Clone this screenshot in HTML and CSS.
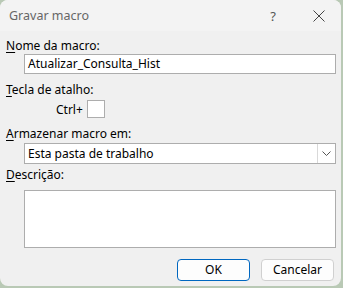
FILE: index.html
```html
<!DOCTYPE html>
<html lang="pt">
<head>
  <meta charset="UTF-8" />
  <title>Gravar macro</title>
  <link rel="stylesheet" href="styles.css">
</head>
<body>
  <div class="dialog">
    <div class="titlebar">
      <span class="title">Gravar macro</span>
      <span class="help">?</span>
      <svg class="close" width="12" height="12" viewBox="0 0 12 12">
        <path d="M0.5 0.5 L11.5 11.5 M11.5 0.5 L0.5 11.5" stroke="#444" stroke-width="1" fill="none"/>
      </svg>
    </div>

    <div class="content">
      <div class="label"><u>N</u>ome da macro:</div>
      <div class="box input">Atualizar_Consulta_Hist</div>

      <div class="label gap"><u>T</u>ecla de atalho:</div>
      <div class="shortcut">
        <span>Ctrl+</span>
        <div class="box key"></div>
      </div>

      <div class="label gap"><u>A</u>rmazenar macro em:</div>
      <div class="box combo">
        <span>Esta pasta de trabalho</span>
        <div class="arrow">
          <svg width="9" height="5" viewBox="0 0 9 5">
            <path d="M0.5 0.5 L4.5 4.5 L8.5 0.5" stroke="#555" stroke-width="1" fill="none"/>
          </svg>
        </div>
      </div>

      <div class="label gap-sm"><u>D</u>escrição:</div>
      <div class="box textarea"></div>

      <div class="buttons">
        <div class="btn primary">OK</div>
        <div class="btn">Cancelar</div>
      </div>
    </div>
  </div>
</body>
</html>
```

FILE: styles.css
```css
body {
  margin: 0;
  padding: 0;
  background: #b9c9b5;
  font-family: "Noto Sans", "Open Sans", sans-serif;
  font-size: 12px;
  color: #000;
}
.dialog {
  width: 341px;
  height: 286px;
  background: #f0f0f0;
  border-radius: 8px;
  overflow: hidden;
}
.titlebar {
  height: 31px;
  background: #f3f3f3;
  display: flex;
  align-items: center;
  padding-left: 9px;
}
.title {
  color: #666;
  font-size: 12.5px;
  flex: 1;
}
.help {
  color: #555;
  font-size: 13px;
  margin-right: 37px;
}
.close {
  margin-right: 16px;
}
.content {
  padding: 7px 5px 0 6px;
}
.label {
  line-height: 15px;
  height: 15px;
}
.label u {
  text-decoration-thickness: 1px;
  text-underline-offset: 2px;
}
.gap {
  margin-top: 8px;
}
.gap-sm {
  margin-top: 3px;
}
.box {
  background: #fff;
  border: 1px solid #adadad;
  box-sizing: border-box;
}
.input {
  margin: 1px 0 0 18px;
  height: 20px;
  line-height: 18px;
  padding-left: 3px;
}
.shortcut {
  display: flex;
  align-items: center;
  margin: 3px 0 0 50px;
}
.shortcut span {
  margin-right: 4px;
}
.key {
  width: 18px;
  height: 18px;
}
.combo {
  margin: 2px 0 0 18px;
  height: 21px;
  display: flex;
  align-items: center;
  padding-left: 3px;
}
.combo span {
  flex: 1;
}
.arrow {
  width: 17px;
  height: 19px;
  border-left: 1px solid #d9d9d9;
  display: flex;
  align-items: center;
  justify-content: center;
}
.textarea {
  margin: 8px 0 0 18px;
  height: 58px;
}
.buttons {
  display: flex;
  justify-content: flex-end;
  gap: 11px;
  margin: 11px 2px 0 0;
}
.btn {
  width: 73px;
  height: 22px;
  box-sizing: border-box;
  border: 1px solid #d0d0d0;
  border-radius: 4px;
  background: #fdfdfd;
  text-align: center;
  line-height: 20px;
}
.btn.primary {
  border-color: #0067c0;
}
```
